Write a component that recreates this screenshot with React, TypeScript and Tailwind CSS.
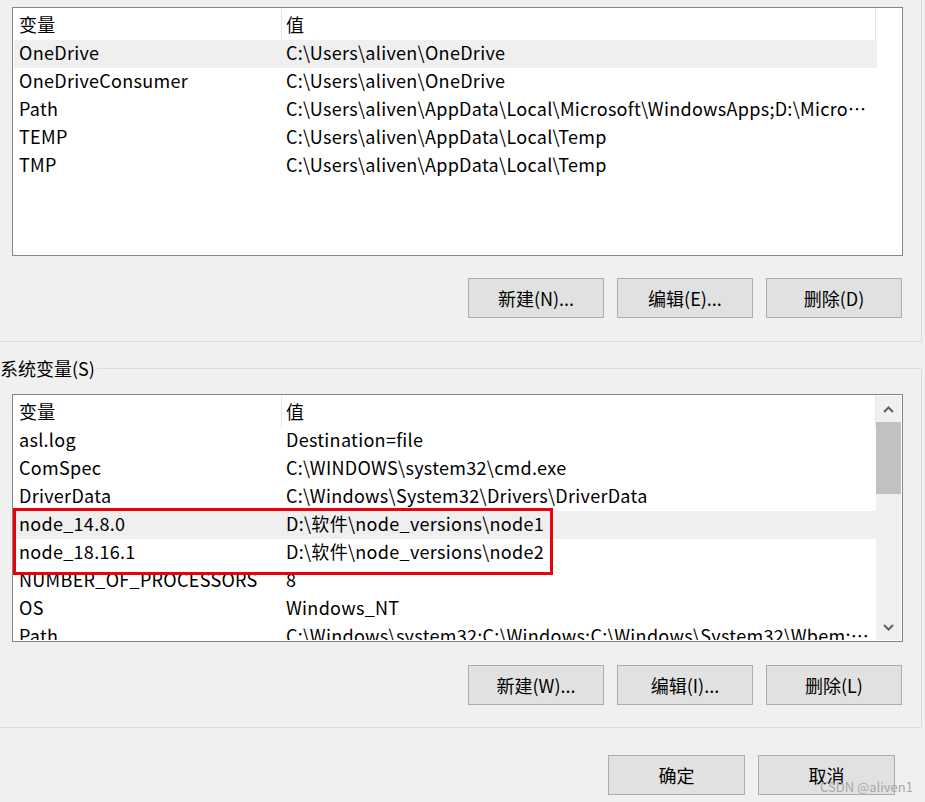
import React from 'react';

type Row = { name: string; value: string; hl?: boolean };

const USER_VARS: Row[] = [
  { name: 'OneDrive', value: 'C:\\Users\\aliven\\OneDrive', hl: true },
  { name: 'OneDriveConsumer', value: 'C:\\Users\\aliven\\OneDrive' },
  {
    name: 'Path',
    value: 'C:\\Users\\aliven\\AppData\\Local\\Microsoft\\WindowsApps;D:\\Microsoft VS Code\\bin',
  },
  { name: 'TEMP', value: 'C:\\Users\\aliven\\AppData\\Local\\Temp' },
  { name: 'TMP', value: 'C:\\Users\\aliven\\AppData\\Local\\Temp' },
];

const SYS_VARS: Row[] = [
  { name: 'asl.log', value: 'Destination=file' },
  { name: 'ComSpec', value: 'C:\\WINDOWS\\system32\\cmd.exe' },
  { name: 'DriverData', value: 'C:\\Windows\\System32\\Drivers\\DriverData' },
  { name: 'node_14.8.0', value: 'D:\\软件\\node_versions\\node1', hl: true },
  { name: 'node_18.16.1', value: 'D:\\软件\\node_versions\\node2' },
  { name: 'NUMBER_OF_PROCESSORS', value: '8' },
  { name: 'OS', value: 'Windows_NT' },
  {
    name: 'Path',
    value: 'C:\\Windows\\system32;C:\\Windows;C:\\Windows\\System32\\Wbem;%SYSTEMROOT%\\System32\\WindowsPowerShell',
  },
];

function Chevron({ up }: { up?: boolean }) {
  return (
    <svg width="11" height="7" viewBox="0 0 11 7">
      <polyline
        points={up ? '1,6 5.5,1.5 10,6' : '1,1 5.5,5.5 10,1'}
        fill="none"
        stroke="#606060"
        strokeWidth="2"
      />
    </svg>
  );
}

function Button({ label, wide }: { label: string; wide?: boolean }) {
  return (
    <button
      className={
        'h-[40px] bg-[#e1e1e1] border border-[#adadad] text-[18px] text-black flex items-center justify-center ' +
        (wide ? 'w-[137px]' : 'w-[136px]')
      }
    >
      {label}
    </button>
  );
}

function VarList({ rows, height, scroll, marked }: { rows: Row[]; height: string; scroll?: boolean; marked?: boolean }) {
  return (
    <div className={'w-[891px] border border-[#828790] bg-white p-px flex relative ' + height}>
      <div className="w-[863px] overflow-hidden tracking-[0.3px]">
        {/* header */}
        <div className="flex h-[31px] w-[862px] border-r border-[#e5e5e5]">
          <div className="w-[268px] border-r border-[#e5e5e5] pl-[5px] leading-[31px]">变量</div>
          <div className="flex-1 pl-[4px] leading-[31px]">值</div>
        </div>
        {rows.map((r, i) => (
          <div key={i} className={'flex h-[28px] leading-[25px] ' + (r.hl ? 'bg-[#efefef]' : '')}>
            <div className="w-[268px] pl-[5px] whitespace-nowrap overflow-hidden">{r.name}</div>
            <div className="w-[590px] pl-[4px] whitespace-nowrap overflow-hidden text-ellipsis">{r.value}</div>
          </div>
        ))}
      </div>
      {scroll && (
        <div className="w-[25px] bg-[#f0f0f0] flex flex-col">
          <div className="h-[26px] flex items-center justify-center">
            <Chevron up />
          </div>
          <div className="h-[72px] bg-[#c1c1c1]" />
          <div className="flex-1" />
          <div className="h-[26px] flex items-center justify-center">
            <Chevron />
          </div>
        </div>
      )}
      {marked && (
        <div className="absolute left-0 top-[113px] w-[540px] h-[67px] border-[3px] border-[#e8000b] pointer-events-none" />
      )}
    </div>
  );
}

export default function App() {
  return (
    <div
      className="w-[925px] h-[802px] bg-[#f0f0f0] overflow-hidden relative text-[18px] text-black"
      style={{ fontFamily: '"Microsoft YaHei", "Noto Sans CJK SC", sans-serif' }}
    >
      {/* user variables */}
      <div className="w-[922px] h-[342px] border-r border-b border-[#dcdcdc] pt-[7px] pl-[12px]">
        <VarList rows={USER_VARS} height="h-[249px]" />
        <div className="w-[890px] flex justify-end gap-[13px] mt-[22px]">
          <Button label="新建(N)..." />
          <Button label="编辑(E)..." />
          <Button label="删除(D)" />
        </div>
      </div>

      {/* system variables */}
      <fieldset className="mt-[14px] w-[922px] border-t border-r border-b border-[#dcdcdc] p-0">
        <legend className="p-0 pr-[2px] leading-[24px]">系统变量(S)</legend>
        <div className="pl-[12px] pt-[14px] pb-[22px]">
          <VarList rows={SYS_VARS} height="h-[248px]" scroll marked />
          <div className="w-[890px] flex justify-end gap-[13px] mt-[23px]">
            <Button label="新建(W)..." />
            <Button label="编辑(I)..." />
            <Button label="删除(L)" />
          </div>
        </div>
      </fieldset>

      <div className="w-[922px] flex justify-end gap-[13px] mt-[27px] pr-[27px]">
        <Button label="确定" wide />
        <Button label="取消" wide />
      </div>

      <div className="absolute left-[820px] top-[778px] text-[13px] text-[#a8a8a8] leading-[18px]">
        CSDN @aliven1
      </div>
    </div>
  );
}
